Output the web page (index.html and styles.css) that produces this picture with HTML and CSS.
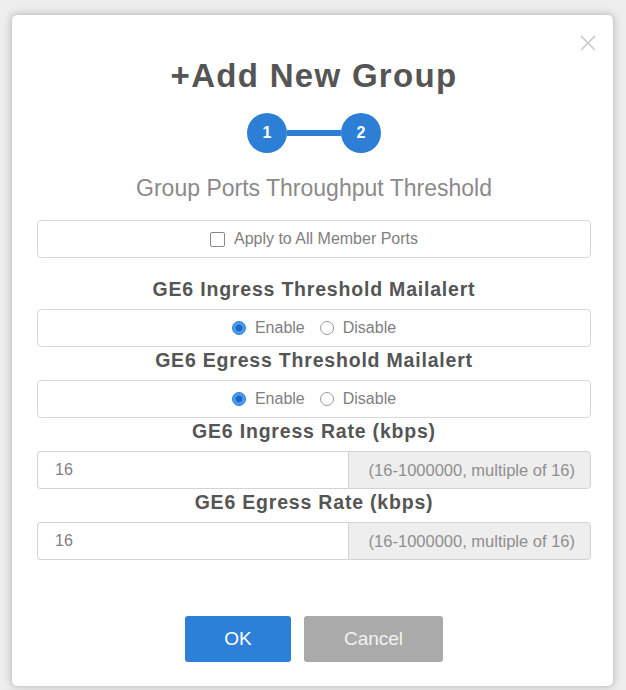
FILE: index.html
```html
<!DOCTYPE html>
<html lang="en">

<head>
    <meta charset="UTF-8">
    <meta name="viewport" content="width=device-width, initial-scale=1.0">
    <title>Add New Group</title>
    <link rel="stylesheet" href="styles.css">
</head>

<body>
    <div class="modal">
        <button class="close" aria-label="Close">
            <svg width="18" height="18" viewBox="0 0 18 18">
                <path d="M2 2 L16 16 M16 2 L2 16" stroke="#c9c9c9" stroke-width="1.6" fill="none" />
            </svg>
        </button>

        <h2 class="title">+Add New Group</h2>

        <!-- Wizard steps -->
        <div class="steps">
            <span class="step">1</span>
            <span class="step-line"></span>
            <span class="step">2</span>
        </div>

        <p class="subtitle">Group Ports Throughput Threshold</p>

        <div class="box box-apply">
            <label class="check"><input type="checkbox" id="applyAll"> Apply to All Member Ports</label>
        </div>

        <div class="field-label">GE6 Ingress Threshold Mailalert</div>
        <div class="box">
            <label class="radio"><input type="radio" name="ingressAlert" checked> Enable</label>
            <label class="radio"><input type="radio" name="ingressAlert"> Disable</label>
        </div>

        <div class="field-label">GE6 Egress Threshold Mailalert</div>
        <div class="box">
            <label class="radio"><input type="radio" name="egressAlert" checked> Enable</label>
            <label class="radio"><input type="radio" name="egressAlert"> Disable</label>
        </div>

        <div class="field-label">GE6 Ingress Rate (kbps)</div>
        <div class="input-group">
            <input type="text" id="ingressRate" value="16">
            <span class="addon">(16-1000000, multiple of 16)</span>
        </div>

        <div class="field-label">GE6 Egress Rate (kbps)</div>
        <div class="input-group">
            <input type="text" id="egressRate" value="16">
            <span class="addon">(16-1000000, multiple of 16)</span>
        </div>

        <div class="actions">
            <button class="btn btn-ok">OK</button>
            <button class="btn btn-cancel">Cancel</button>
        </div>
    </div>
</body>

</html>
```

FILE: styles.css
```css
* {
    margin: 0;
    padding: 0;
    box-sizing: border-box;
    font-family: 'Liberation Sans', Arial, sans-serif;
}

body {
    background-color: #eeeeee;
    height: 690px;
    overflow: hidden;
    padding: 14px 12px 0 11px;
}

.modal {
    position: relative;
    width: 603px;
    background-color: #fff;
    border: 1px solid #cfcfcf;
    border-radius: 6px;
    box-shadow: 0 0 8px rgba(0, 0, 0, 0.22);
    padding: 41px 22px 24px 25px;
}

.close {
    position: absolute;
    top: 19px;
    right: 16px;
    width: 18px;
    height: 18px;
    border: none;
    background: none;
    cursor: pointer;
}

.title {
    text-align: center;
    font-size: 33px;
    line-height: 40px;
    letter-spacing: 1.3px;
    font-weight: bold;
    color: #555;
}

.steps {
    display: flex;
    justify-content: center;
    align-items: center;
    margin-top: 17px;
    height: 40px;
}

.step {
    width: 40px;
    height: 40px;
    border-radius: 50%;
    background-color: #2d7fd5;
    color: #fff;
    font-weight: bold;
    font-size: 16px;
    display: flex;
    justify-content: center;
    align-items: center;
}

.step-line {
    width: 54px;
    height: 6px;
    background-color: #2d7fd5;
}

.subtitle {
    text-align: center;
    margin-top: 20px;
    font-size: 23px;
    line-height: 30px;
    color: #8a8a8a;
}

.box {
    height: 38px;
    border: 1px solid #d8d8d8;
    border-radius: 4px;
    display: flex;
    justify-content: center;
    align-items: center;
    gap: 15px;
    font-size: 16px;
    color: #808080;
}

.box-apply {
    margin-top: 17px;
    margin-bottom: 18px;
}

.box label {
    display: flex;
    align-items: center;
    gap: 9px;
}

.check input {
    appearance: none;
    width: 15px;
    height: 15px;
    border: 1px solid #888;
    border-radius: 2px;
    background-color: #fff;
}

.radio input {
    appearance: none;
    width: 14px;
    height: 14px;
    border: 1px solid #999;
    border-radius: 50%;
    background-color: #fff;
}

.radio input:checked {
    border-color: #2b7bd6;
    background: radial-gradient(circle, #1c67c4 0, #1c67c4 35%, #4b9cec 45%, #4b9cec 100%);
}

.field-label {
    text-align: center;
    font-size: 19.5px;
    line-height: 27px;
    letter-spacing: 0.8px;
    font-weight: bold;
    color: #555;
    margin-bottom: 6px;
}

.input-group {
    display: flex;
    height: 38px;
}

.input-group input {
    flex: 1;
    border: 1px solid #d3d3d3;
    border-right: none;
    border-radius: 4px 0 0 4px;
    padding-left: 17px;
    font-size: 16px;
    color: #808080;
    outline: none;
}

.input-group .addon {
    width: 243px;
    display: flex;
    align-items: center;
    justify-content: flex-end;
    padding-right: 15px;
    background-color: #eeeeee;
    border: 1px solid #d3d3d3;
    border-radius: 0 4px 4px 0;
    font-size: 16.5px;
    color: #8f8f8f;
}

.actions {
    display: flex;
    justify-content: center;
    gap: 13px;
    margin-top: 56px;
}

.btn {
    height: 46px;
    border: none;
    border-radius: 3px;
    font-size: 19px;
    cursor: pointer;
}

.btn-ok {
    width: 106px;
    background-color: #2d80d8;
    color: #fff;
}

.btn-cancel {
    width: 139px;
    background-color: #aaaaaa;
    color: #f2f2f2;
}
```
